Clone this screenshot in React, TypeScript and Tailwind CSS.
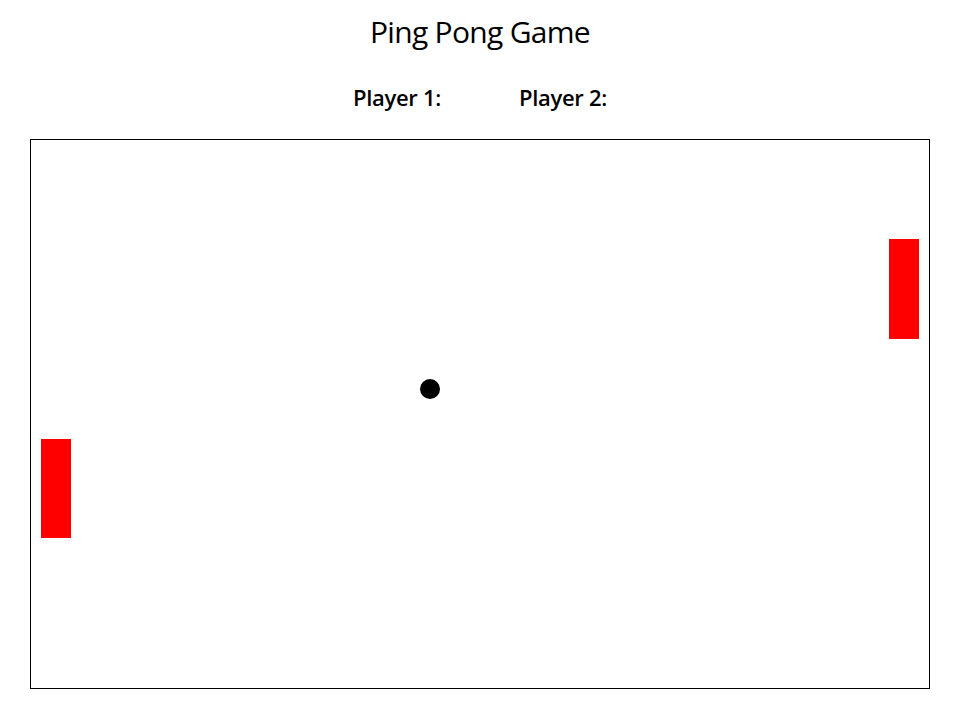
export default function App() {
  return (
    <div
      className="w-[957px] h-[712px] bg-white text-black"
      style={{ fontFamily: '"Open Sans", "Noto Sans", sans-serif' }}
    >
      <div className="ml-[30px] w-[900px] flex flex-col items-center">
        <h1 className="mt-[11px] text-[30px] leading-[42px] font-medium tracking-[-0.7px]">
          Ping Pong Game
        </h1>
        <div className="mt-[29px] flex gap-[78px] text-[22px] leading-[30px] font-semibold tracking-[-0.3px]">
          <span>Player 1:</span>
          <span>Player 2:</span>
        </div>
      </div>
      <div className="mt-[27px] ml-[30px] w-[900px] h-[550px] border border-black relative">
        <div className="absolute left-[10px] top-[299px] w-[30px] h-[99px] bg-[#ff0000]" />
        <div className="absolute left-[858px] top-[99px] w-[30px] h-[100px] bg-[#ff0000]" />
        <div className="absolute left-[389px] top-[239px] w-[20px] h-[20px] rounded-full bg-black" />
      </div>
    </div>
  );
}
